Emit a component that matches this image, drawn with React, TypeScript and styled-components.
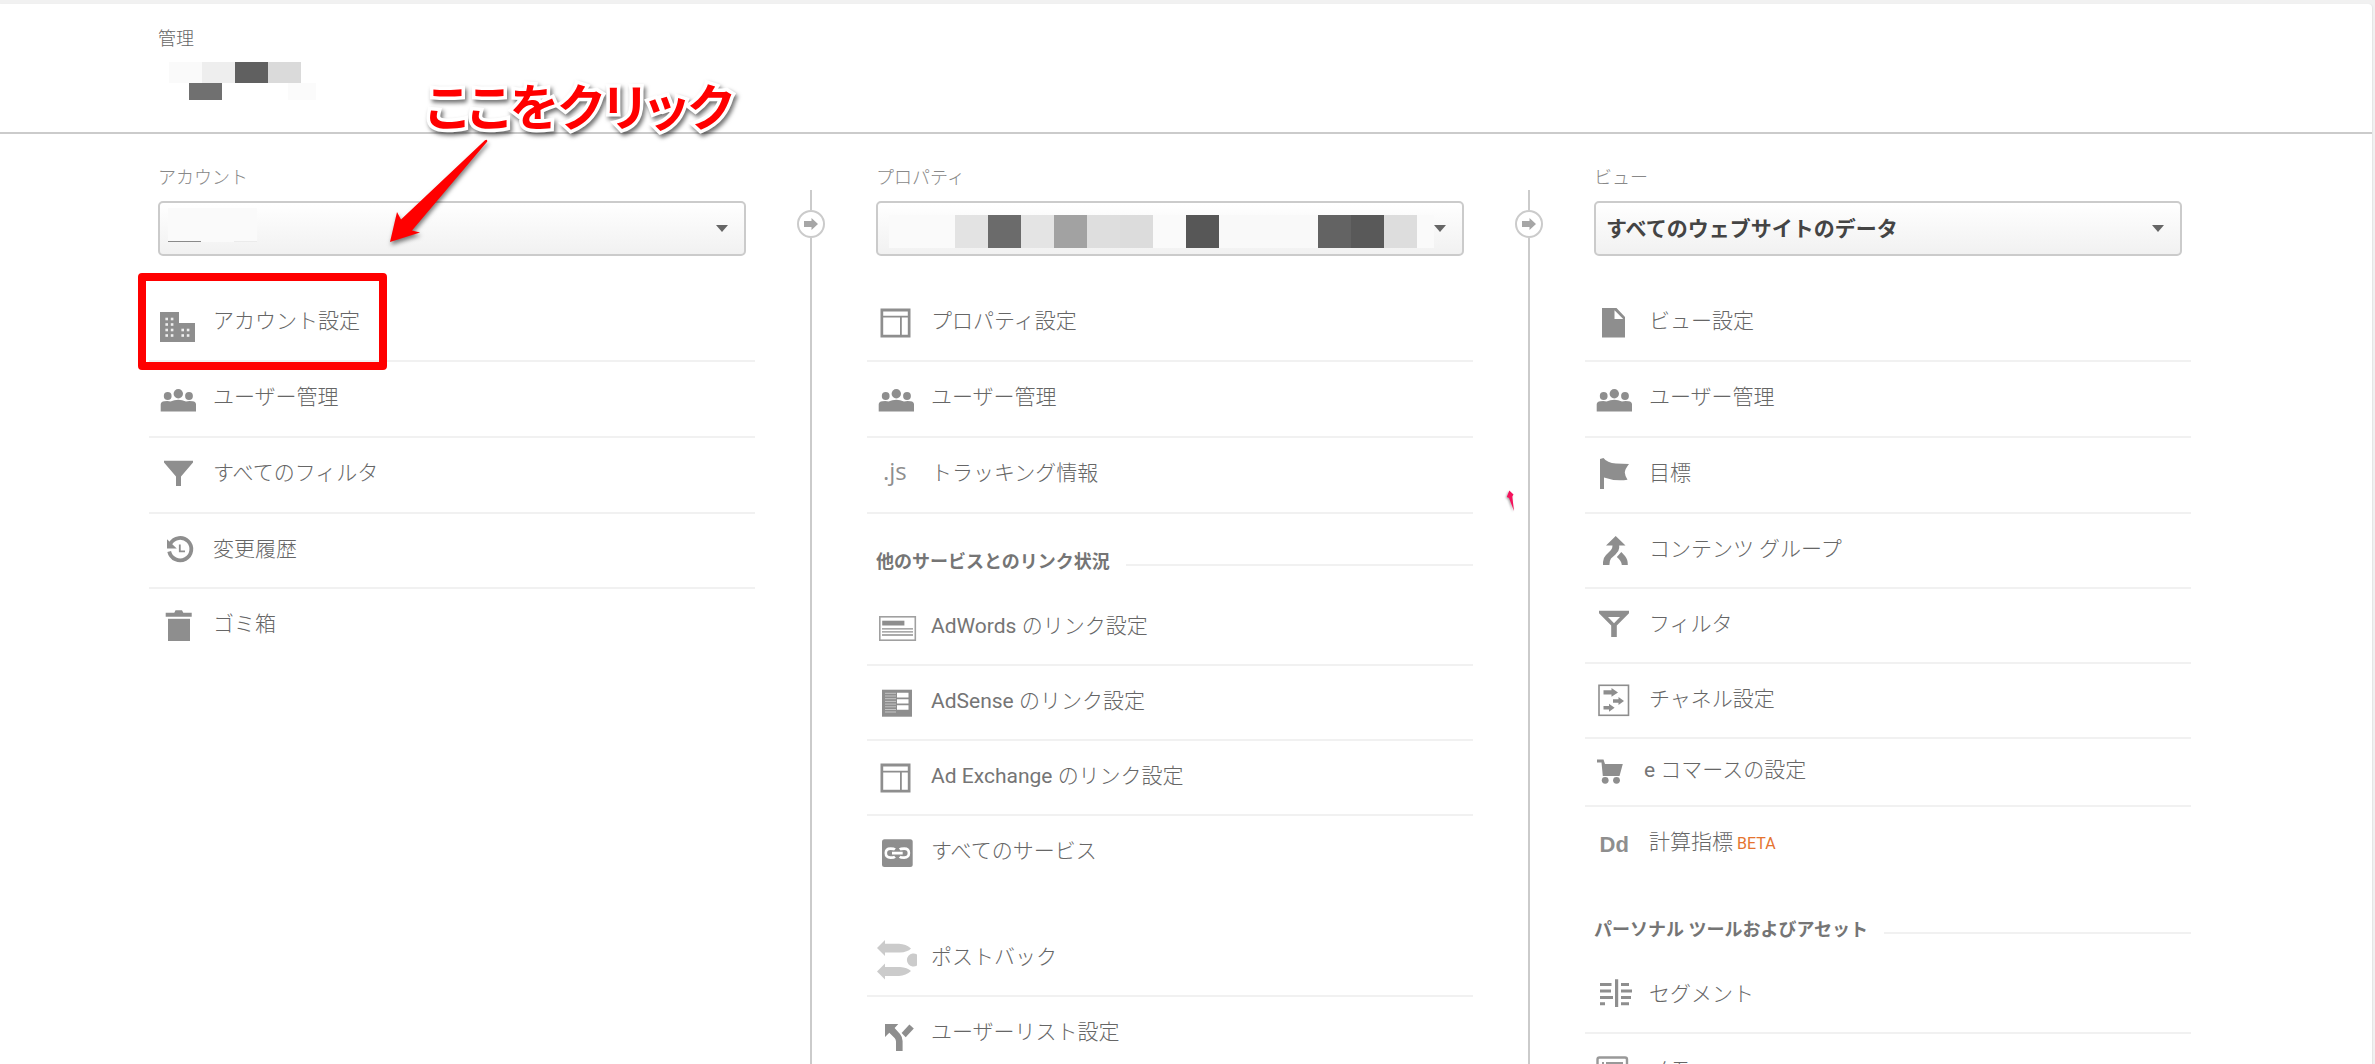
import React from "react";
import styled, { createGlobalStyle, css } from "styled-components";

const GlobalStyle = createGlobalStyle`
  *, *::before, *::after { box-sizing: border-box; }
  body {
    margin: 0;
    background: #f1f1f1;
    color: #757575;
    font-family: Roboto, "Noto Sans CJK JP", sans-serif;
    font-size: 18px;
    line-height: 24px;
  }
`;

const line = "#f1f1f1";
const edge = "#cbcbcb";
const ink = "#8e8e8e";
const thinInk = "#666";

const Page = styled.div`
  position: relative;
  display: flex;
  flex-direction: column;
  height: 100vh;
  overflow: hidden;
  padding: 4px 3px 0 0;
`;

const Panel = styled.main`
  flex: 1;
  display: flex;
  flex-direction: column;
  background: #fff;
  border-radius: 0 4px 0 0;
  box-shadow: 1px 0 1px #e4e4e4;
`;

const Header = styled.header`
  height: 130px;
  flex: none;
  padding: 23px 158px 0;
  border-bottom: 2px solid ${edge};
`;

const Title = styled.h1`
  margin: 0 0 11px;
  color: ${thinInk};
  font-size: 18px;
  line-height: 24px;
  font-weight: 300;
`;

const Pixels = styled.div`
  display: flex;
  pointer-events: none;
`;

const HeaderPixels = styled(Pixels)<{ $indent: number }>`
  padding-left: ${(p) => p.$indent}px;
`;

const Pixel = styled.span<{ $tone: string; $w?: number; $h?: number }>`
  width: ${(p) => p.$w ?? 33}px;
  height: ${(p) => p.$h ?? 33}px;
  background: ${(p) => p.$tone};
`;

const Columns = styled.div`
  flex: 1;
  min-height: 0;
  display: grid;
  grid-template-columns: minmax(0, 1fr) 112px minmax(0, 1fr) 112px minmax(0, 1fr);
  padding: 0 181px 0 149px;
`;

const Column = styled.section`
  padding-top: 32px;
`;

const Divider = styled.div`
  display: flex;
  flex-direction: column;
  align-items: center;
  margin-top: 56px;
`;

const Rule = styled.span<{ $length?: number }>`
  width: 2px;
  background: ${edge};
  ${(p) => (p.$length ? css`height: ${p.$length}px;` : css`flex: 1;`)}
`;

const Knob = styled.span`
  display: flex;
  align-items: center;
  justify-content: center;
  width: 28px;
  height: 28px;
  border: 2px solid ${edge};
  border-radius: 50%;
`;

const Picker = styled.div`
  padding: 0 9px;
`;

const PickerLabel = styled.label`
  display: block;
  margin-bottom: 11px;
  color: #888;
  font-weight: 300;
`;

const SelectBox = styled.div`
  position: relative;
`;

const Select = styled.select`
  appearance: none;
  display: block;
  width: 100%;
  height: 55px;
  padding: 0 44px 0 10px;
  border: 2px solid ${edge};
  border-radius: 5px;
  background: linear-gradient(#fff, #f1f1f1);
  color: #444;
  font: bold 21px/36px Roboto, "Noto Sans CJK JP", sans-serif;
`;

const Caret = styled.span`
  position: absolute;
  right: 18px;
  top: 24px;
  border: 6px solid transparent;
  border-top: 7px solid #666;
  border-bottom: 0;
  pointer-events: none;
`;

const SelectPixels = styled(Pixels)<{ $left: number; $top: number }>`
  position: absolute;
  left: ${(p) => p.$left}px;
  top: ${(p) => p.$top}px;
`;

const List = styled.ul`
  margin: 0;
  padding: 0;
  list-style: none;
`;

type Size = "tall" | "regular" | "compact";
const rowHeight = { tall: 76, regular: 75, compact: 68 };
const rowPad = { tall: 17, regular: 17, compact: 13 };

const Row = styled.li<{ $size: Size; $last?: boolean }>`
  position: relative;
  height: ${(p) => rowHeight[p.$size]}px;
  border-bottom: 2px solid ${(p) => (p.$last ? "transparent" : line)};
`;

const RowLink = styled.a<{ $size: Size }>`
  display: flex;
  gap: ${(p) => (p.$size === "compact" ? 10 : 15)}px;
  padding: ${(p) => rowPad[p.$size]}px 9px 0;
  color: inherit;
  text-decoration: none;
  font-size: 21px;
  line-height: 36px;
`;

const RowText = styled.span`
  color: ${thinInk};
  font-weight: 300;
`;

const Latin = styled.span`
  color: #757575;
  font-weight: 400;
`;

const Beta = styled.small`
  margin-left: 4px;
  color: #e5742f;
  font-size: 16px;
  font-weight: 400;
`;

const Highlight = styled.span`
  position: absolute;
  left: -11px;
  top: -13px;
  width: 249px;
  height: 97px;
  border: 8px solid #f00;
  border-radius: 4px;
  pointer-events: none;
  z-index: 1;
`;

const Heading = styled.h2`
  display: flex;
  align-items: center;
  gap: 16px;
  height: 77px;
  margin: 0;
  padding: 18px 0 0 9px;
  font-size: 18px;
  font-weight: 700;
  &::after {
    content: "";
    flex: 1;
    height: 2px;
    margin-top: 6px;
    background: ${line};
  }
`;

const Settings = styled.div`
  margin-top: 30px;
`;

const Gap = styled.div`
  height: 31px;
`;

const Glyph = styled.svg`
  flex: none;
  width: 40px;
  height: 40px;
  overflow: visible;
  fill: ${ink};
`;

const Callout = styled.strong`
  position: absolute;
  left: 426px;
  top: 68px;
  color: #f00;
  font-family: "Noto Sans CJK JP", sans-serif;
  font-size: 50px;
  line-height: 72px;
  font-feature-settings: "palt";
  white-space: nowrap;
  -webkit-text-stroke: 7px #fff;
  paint-order: stroke fill;
  filter: drop-shadow(2px 3px 2px rgba(0, 0, 0, 0.55));
`;

const Arrow = styled.svg`
  position: absolute;
  left: 386px;
  top: 134px;
  filter: drop-shadow(1px 3px 2px rgba(0, 0, 0, 0.5));
`;

const Mark = styled.svg`
  position: absolute;
  left: 1506px;
  top: 490px;
  filter: drop-shadow(-1px 1px 1px rgba(0, 0, 0, 0.35));
`;

const icons: Record<string, React.ReactNode> = {
  building: (
    <>
      <path d="M2 9H21V20H37V39H2Z" />
      <g fill="#fff" opacity="0.85">
        {[16, 21.5, 27, 32.5].map((y) => (
          <g key={y}>
            <rect x="7.4" y={y - 1.3} width="2.6" height="2.6" />
            <rect x="12.8" y={y - 1.3} width="2.6" height="2.6" />
          </g>
        ))}
        {[27, 32.5].map((y) => (
          <g key={y}>
            <rect x="23.4" y={y - 1.3} width="2.6" height="2.6" />
            <rect x="28.8" y={y - 1.3} width="2.6" height="2.6" />
          </g>
        ))}
      </g>
    </>
  ),
  users: (
    <>
      <circle cx="9.7" cy="17" r="3.9" />
      <circle cx="20.3" cy="14.8" r="4.7" />
      <circle cx="31" cy="17" r="3.9" />
      <path d="M2.7 32.5V25.5Q2.7 22.5 6.5 22.2Q10 21.6 12.5 22.4Q20.3 19 28 22.4Q31 21.6 34.5 22.2Q38 22.5 38 25.5V32.5Z" />
    </>
  ),
  filter: <path d="M6 5.7H35V7.5L23 21.5V31H18V21.5L6 7.5Z" />,
  history: (
    <>
      <path d="M12.4 12.6A11.2 11.2 0 1 1 11.2 20.5" fill="none" stroke={ink} strokeWidth="3.8" />
      <path d="M9 8.2V17.4H18.8Z" />
      <path d="M21.8 13.5V20.3H27" fill="none" stroke={ink} strokeWidth="1.8" />
    </>
  ),
  trash: (
    <>
      <path d="M7.7 6.7H16.3L17.5 4.3H24L25.3 6.7H33.7V10.8H7.7Z" />
      <path d="M10 12.8H32V35H10Z" />
    </>
  ),
  layout: (
    <path
      fillRule="evenodd"
      d="M4.5 5.5H34.5V34.5H4.5ZM7.2 8.6V12.8H31.8V8.6ZM7.2 14.6V31.8H24V14.6ZM25.8 14.6V31.8H31.8V14.6Z"
    />
  ),
  js: (
    <text x="7" y="25" fill="#8e8e8e" fontFamily="Open Sans, sans-serif" fontSize="24">
      .js
    </text>
  ),
  adwords: (
    <>
      <rect x="3.8" y="8.8" width="35.5" height="23.4" fill="none" stroke="#a0a0a0" strokeWidth="1.6" />
      <rect x="6.2" y="12.7" width="22.2" height="4.8" />
      <path d="M6 20.8H37M6 23.8H37M6 27H37" stroke={ink} strokeWidth="1.3" />
    </>
  ),
  adsense: (
    <>
      <rect x="6" y="6.7" width="30" height="27" />
      <path d="M21 9.7H32.5V14.4H21ZM21 16.3H32.5V20.4H21ZM21 22.2H32.5V26.8H21Z" fill="#fff" />
      <path d="M9 10.3H20M9 13H20M9 15.7H20M9 18.4H20M9 21.1H20M9 23.8H20M9 26.5H20M9 29H20" stroke="#c4c4c4" strokeWidth="1" />
    </>
  ),
  link: (
    <>
      <rect x="6" y="6.3" width="30.7" height="27.7" rx="2.5" />
      <path
        d="M19 16.5Q18 15.6 14.5 15.6Q9.8 15.6 9.8 20.1Q9.8 24.6 14.5 24.6Q18 24.6 19 23.7M23.7 16.5Q24.7 15.6 28.2 15.6Q32.9 15.6 32.9 20.1Q32.9 24.6 28.2 24.6Q24.7 24.6 23.7 23.7M16 20.1H26.7"
        fill="none"
        stroke="#fff"
        strokeWidth="2.6"
      />
    </>
  ),
  postback: (
    <g fill="#cbcbcb">
      <path d="M1 9L9 1V4.700H23Q30 5 35 9.500Q31.500 13.200 24 13.600H9V17Z" />
      <path d="M1 32.500L9 24.500V28H24Q31.500 28.400 35 32Q30 36.600 23 37H9V40.500Z" />
      <path d="M41 15.400V26.600A6.600 6.600 0 1 1 41 15.400Z" />
    </g>
  ),
  split: (
    <>
      <path d="M9 10H22.300L18.600 14L24 20Q26.600 23 26.600 27V37H20V27.500Q20 25.500 18.600 24L13.300 18.800L9 23Z" />
      <path d="M25.600 19L33.400 10.500L37.800 14.600L29.700 23.300Z" />
    </>
  ),
  file: <path fillRule="evenodd" d="M8 5H22.500L31 14V34.500H8ZM20.500 7.300V16H29.200Z" />,
  flag: <path d="M6 4L9.500 3Q13 8 22 8.400L35 9Q31 14 30.800 17.500Q31 21 33.500 24.800Q21 26.500 10 22.500V34H6Z" />,
  merge: (
    <>
      <path d="M21.700 5L31.500 14.500H25.200V17Q25 20.500 21.500 23.500L17 27.500Q15.500 29.500 15.400 34H9V31Q9 27 12 24L17 19Q18.500 17.500 18.500 14.500H12Z" />
      <path d="M27.300 21L31 25Q34 28.500 33.800 34H27.800Q27.600 30 22.800 26Z" />
    </>
  ),
  funnel: <path fillRule="evenodd" d="M5 4.800H35V7.200L22.800 19.500V31H17.200V19.500L5 7.200ZM14 11L20 17.300L26 11Z" />,
  channel: (
    <>
      <rect x="5" y="4.300" width="29.500" height="30" fill="none" stroke={ink} strokeWidth="1.600" />
      <path d="M9.500 9.300H17.500V7L24 11.400L17.500 15.800V13.500H9.500ZM19 18.300H24.500V16L30 20L24.500 24V21.700H19ZM9.500 25.100H15V22.800L20.600 26.800L15 30.800V28.500H9.500Z" />
    </>
  ),
  cart: (
    <>
      <path d="M3 7.500H9.500L11 12H28.800L25.500 24H8.800L7.500 10.500H3Z" />
      <circle cx="11.200" cy="28.300" r="3.400" />
      <circle cx="22.500" cy="28.300" r="3.400" />
    </>
  ),
  dd: (
    <text x="5.500" y="28" fontFamily="Liberation Sans, sans-serif" fontSize="22" fontWeight="bold">
      Dd
    </text>
  ),
  segment: (
    <path
      d="M21 3.300H24.200V31H21ZM6 7H17.500V10H6ZM6 13.600H17V16.600H6ZM6 19.900H19V22.900H6ZM6 26.300H11V29.300H6ZM27 7H35V10H27ZM27 13.600H38V16.600H27ZM27 19.900H37V22.900H27ZM27 26.300H35V29.300H27Z"
    />
  ),
  memo: (
    <>
      <rect x="3.500" y="6.500" width="29.500" height="27" rx="2" fill="none" stroke="#999" strokeWidth="2.400" />
      <path d="M8 12H10M12 12H29M8 17H10M12 17H29M8 22H10M12 22H29" stroke="#999" strokeWidth="2" />
    </>
  ),
};

type Item = {
  icon: string;
  text: string;
  latin?: string;
  size?: Size;
  last?: boolean;
  beta?: boolean;
  marked?: boolean;
};

function Items({ items }: { items: Item[] }) {
  return (
    <List>
      {items.map(({ icon, text, latin, size = "regular", last, beta, marked }) => (
        <Row key={text + latin} $size={size} $last={last}>
          <RowLink href="#" $size={size}>
            <Glyph viewBox="0 0 40 40" aria-hidden="true">
              {icons[icon]}
            </Glyph>
            <RowText>
              {latin && <Latin>{latin} </Latin>}
              {text}
              {beta && <Beta>BETA</Beta>}
            </RowText>
          </RowLink>
          {marked && <Highlight />}
        </Row>
      ))}
    </List>
  );
}

function Chooser({ id, label, value, children }: { id: string; label: string; value?: string; children?: React.ReactNode }) {
  return (
    <Picker>
      <PickerLabel htmlFor={id}>{label}</PickerLabel>
      <SelectBox>
        <Select id={id}>
          <option>{value}</option>
        </Select>
        {children}
        <Caret />
      </SelectBox>
    </Picker>
  );
}

function Step() {
  return (
    <Divider>
      <Rule $length={20} />
      <Knob>
        <svg width="14" height="12" viewBox="0 0 14 12" aria-hidden="true">
          <path d="M0 3H7.500V0L14 6L7.500 12V9H0Z" fill="#a6a6a6" />
        </svg>
      </Knob>
      <Rule />
    </Divider>
  );
}

const accountItems: Item[] = [
  { icon: "building", text: "アカウント設定", size: "tall", marked: true },
  { icon: "users", text: "ユーザー管理", size: "tall" },
  { icon: "filter", text: "すべてのフィルタ", size: "tall" },
  { icon: "history", text: "変更履歴" },
  { icon: "trash", text: "ゴミ箱", last: true },
];

const propertyItems: Item[] = [
  { icon: "layout", text: "プロパティ設定", size: "tall" },
  { icon: "users", text: "ユーザー管理", size: "tall" },
  { icon: "js", text: "トラッキング情報", size: "tall" },
];

const linkItems: Item[] = [
  { icon: "adwords", latin: "AdWords", text: "のリンク設定" },
  { icon: "adsense", latin: "AdSense", text: "のリンク設定" },
  { icon: "layout", latin: "Ad Exchange", text: "のリンク設定" },
  { icon: "link", text: "すべてのサービス", last: true },
];

const extraItems: Item[] = [
  { icon: "postback", text: "ポストバック" },
  { icon: "split", text: "ユーザーリスト設定" },
];

const viewItems: Item[] = [
  { icon: "file", text: "ビュー設定", size: "tall" },
  { icon: "users", text: "ユーザー管理", size: "tall" },
  { icon: "flag", text: "目標", size: "tall" },
  { icon: "merge", text: "コンテンツ グループ" },
  { icon: "funnel", text: "フィルタ" },
  { icon: "channel", text: "チャネル設定" },
  { icon: "cart", latin: "e", text: "コマースの設定", size: "compact" },
  { icon: "dd", text: "計算指標", beta: true, last: true },
];

const assetItems: Item[] = [
  { icon: "segment", text: "セグメント" },
  { icon: "memo", text: "メモ" },
];

const propertyTones = [
  "#fafafa", "#fafafa", "#e3e3e3", "#6b6b6b", "#e4e4e4", "#a2a2a2", "#dedede", "#dcdcdc",
  "#fafafa", "#575757", "#f9f9f9", "#f9f9f9", "#f9f9f9", "#636363", "#595959", "#dddddd",
];

export default function App() {
  return (
    <Page>
      <GlobalStyle />
      <Panel>
        <Header>
          <Title>管理</Title>
          <HeaderPixels $indent={11}>
            <Pixel $tone="#fafafa" $h={21} />
            <Pixel $tone="#eeeeee" $h={21} />
            <Pixel $tone="#606060" $h={21} />
            <Pixel $tone="#dadada" $h={21} />
          </HeaderPixels>
          <HeaderPixels $indent={31}>
            <Pixel $tone="#707070" $h={17} />
            <Pixel $tone="#ffffff" $h={17} $w={66} />
            <Pixel $tone="#fbfbfb" $h={17} $w={28} />
          </HeaderPixels>
        </Header>
        <Columns>
          <Column>
            <Chooser id="account" label="アカウント">
              <SelectPixels $left={10} $top={7}>
                <Pixel $tone="#fafafa" $w={89} />
              </SelectPixels>
              <SelectPixels $left={10} $top={40}>
                <Pixel $tone="#8a8a8a" $h={1} />
                <Pixel $tone="#fafafa" $h={1} />
                <Pixel $tone="#ebebeb" $h={1} $w={23} />
              </SelectPixels>
            </Chooser>
            <Settings>
              <Items items={accountItems} />
            </Settings>
          </Column>
          <Step />
          <Column>
            <Chooser id="property" label="プロパティ">
              <SelectPixels $left={13} $top={14}>
                {propertyTones.map((tone, i) => (
                  <Pixel key={i} $tone={tone} />
                ))}
                <Pixel $tone="#fafafa" $w={17} />
              </SelectPixels>
            </Chooser>
            <Settings>
              <Items items={propertyItems} />
              <Heading>他のサービスとのリンク状況</Heading>
              <Items items={linkItems} />
              <Gap />
              <Items items={extraItems} />
            </Settings>
          </Column>
          <Step />
          <Column>
            <Chooser id="view" label="ビュー" value="すべてのウェブサイトのデータ" />
            <Settings>
              <Items items={viewItems} />
              <Heading>パーソナル ツールおよびアセット</Heading>
              <Items items={assetItems} />
            </Settings>
          </Column>
        </Columns>
      </Panel>
      <Callout>ここをクリック</Callout>
      <Arrow width="110" height="116" viewBox="0 0 110 116" aria-hidden="true">
        <path d="M4 108L11 78L15 85.500L99 6.300Q101.500 5 101.300 7.500L26 96.500L34 98.500Z" fill="#f00" />
      </Arrow>
      <Mark width="9" height="22" viewBox="0 0 9 22" aria-hidden="true">
        <path d="M3.300 0.500L7.500 4.500L6.300 6.500L8 21L3 8L0.800 7Z" fill="#f5125c" />
      </Mark>
    </Page>
  );
}
